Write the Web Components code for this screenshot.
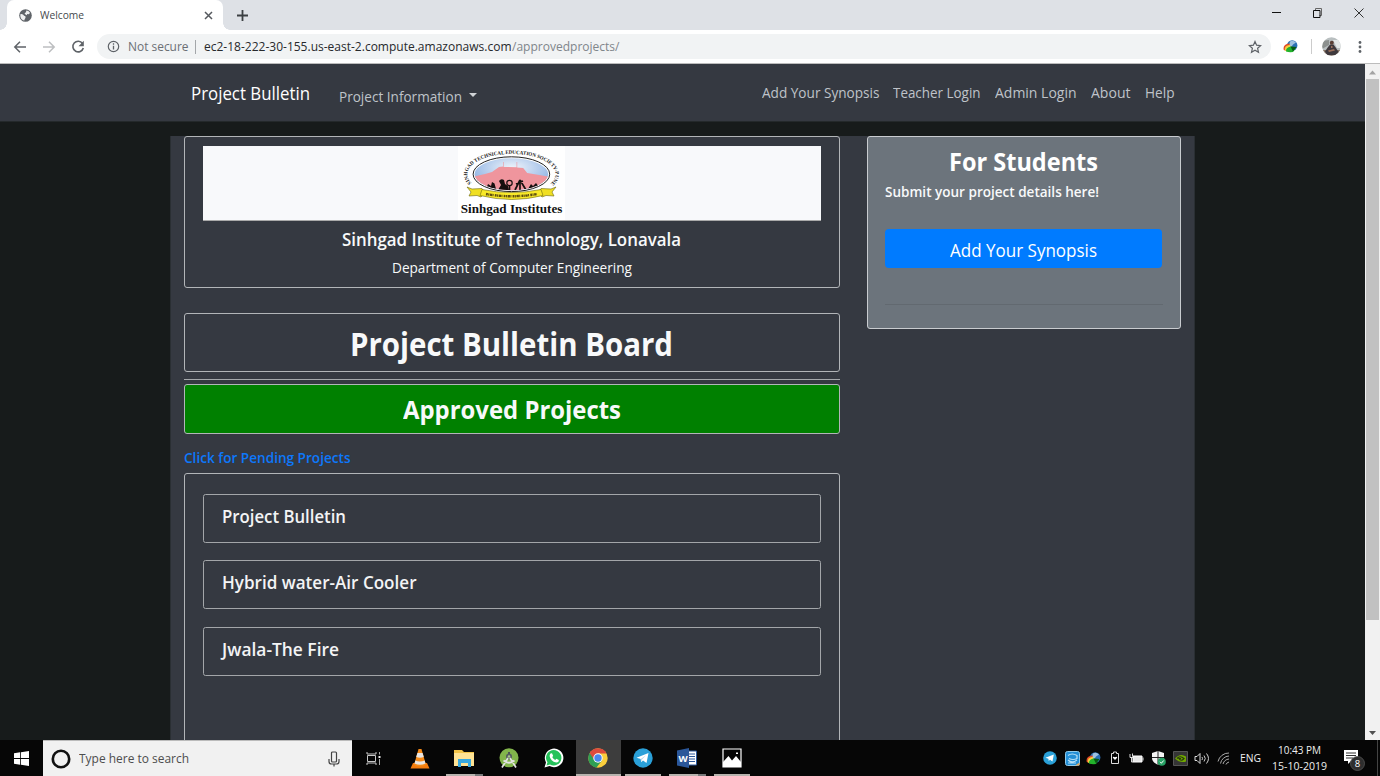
<!DOCTYPE html>
<html lang="en">
<head>
<meta charset="utf-8">
<title>Welcome</title>
<style>
html,body{margin:0;height:100%;overflow:hidden}
body{display:flex;flex-direction:column;width:1380px;height:776px;font-family:"Open Sans","Noto Sans",sans-serif;font-size:14.4px;background:#171b1b}
</style>
</head>
<body>
<browser-tabs></browser-tabs>
<browser-toolbar></browser-toolbar>
<page-view>
  <site-nav></site-nav>
  <bulletin-page></bulletin-page>
</page-view>
<task-bar></task-bar>
<script>
function component(name, css, html, setup) {
  const t = document.createElement('template');
  t.innerHTML = '<style>:host,*{box-sizing:border-box}svg{display:block;flex:none}' + css + '</style>' + html;
  customElements.define(name, class extends HTMLElement {
    constructor() {
      super();
      this.attachShadow({mode: 'open'}).append(t.content.cloneNode(true));
    }
    connectedCallback() { if (setup) setup(this, this.shadowRoot); }
  });
}

component('browser-tabs', `
:host{display:flex;height:30px;background:#dee1e6;flex:none;align-items:stretch;padding-left:7px}
.tab{width:216px;background:#fff;border-radius:7px 7px 0 0;display:flex;align-items:center;padding:0 10px 0 12px;color:#45494d;font-size:11px;position:relative}
.tab:before,.tab:after{content:"";position:absolute;bottom:0;width:7px;height:7px;background:radial-gradient(circle at 0 0,transparent 6.5px,#fff 7px)}
.tab:before{left:-7px}.tab:after{right:-7px;background:radial-gradient(circle at 100% 0,transparent 6.5px,#fff 7px)}
fit-text{margin:-2px 0 0 8px;flex:none}.x{margin-left:auto}
.plus{margin:9px 0 0 13px}
.win{margin-left:auto;display:flex;padding:7px 16px 0 0;gap:30px}
`, `
<div class="tab"><svg width="13" height="13" viewBox="0 0 13 13"><circle cx="6.5" cy="6.5" r="6.3" fill="#5f6368"/><path d="M1.400 5.200C2.800 4.600 4.500 5.500 5 6.800 6.400 6.900 7 7.800 6.400 9 5.800 9.800 5.400 10.800 5.300 11.600 2.500 11 .9 8.600 1.400 5.200zM7.300 1.500Q9.500 1.500 11 3.800L10 5.300 8.300 5 7.600 6.200 6.500 5.500 5.500 4.300 7 3.300z" fill="#fff" opacity=".9"/></svg>
<fit-text w="44">Welcome</fit-text><svg class="x" width="9" height="9" viewBox="0 0 9 9"><path d="M1 1l7 7M8 1l-7 7" stroke="#55595e" stroke-width="1.500"/></svg></div>
<svg class="plus" width="13" height="13"><path d="M6.500 1v11M1 6.500h11" stroke="#3c4043" stroke-width="1.800"/></svg>
<div class="win">
<svg width="11" height="12"><path d="M1 5.500h9" stroke="#111" stroke-width="1"/></svg>
<svg width="11" height="12"><path d="M3.500 3.500v-2h6v7h-2" fill="none" stroke="#666"/><path d="M1.500 3.500h6.500v7h-6.500z" fill="none" stroke="#111"/></svg>
<svg width="11" height="12"><path d="M1.500 1.500l9 9M10.500 1.500l-9 9" stroke="#333" stroke-width="1"/></svg>
</div>`);

component('idm-icon', `:host{display:block;flex:none}`, `
<svg width="15" height="13" viewBox="0 0 15 13"><circle cx="9.200" cy="5.500" r="5.200" fill="#2b70b5"/><path d="M7 1.500q3-2 6 1l-3 2-2 3-2-2z" fill="#9fc0df"/><path d="M.8 10Q-.7 4.500 6.500 3.500L7 6Q3 7 4 11z" fill="#e34a26"/><path d="M1.800 10.500Q1 5.500 7 4.700l.5 2.300Q4 7.500 4.500 11.500z" fill="#f3d03e"/><path d="M3 11.500Q2.500 7.500 8 6.500L13 7.500 10 12Q6 12.500 3 11.500z" fill="#23b32c"/><path d="M7.500 6.500l6 .5-3.500 4.500z" fill="#075a12"/></svg>`);

component('browser-toolbar', `
:host{display:flex;height:34px;background:#fff;flex:none;align-items:center;border-bottom:1px solid #bcbcbc;font-size:12.3px;color:#27292c}
.nav{display:flex;width:97px;padding-left:13px;gap:15px;flex:none}
.omni{display:flex;width:1174px;height:25px;border-radius:13px;background:#f1f3f4;align-items:center;padding:0 9px 0 10px;flex:none}
.ns{margin-left:7.500px;color:#6b6f74}.bar{width:1px;height:14px;background:#a3a6a9;margin:0 8px 0 7px}.path{color:#80868b}
.omni svg:last-child{margin-left:auto}
.omni fit-text{margin-top:-1px}
idm-icon{margin-left:12px}.sep{width:1px;height:15px;background:#ccc;margin:0 10px 0 13px}.dots{margin-left:17px}
`, `
<div class="nav">
<svg width="14" height="14"><path d="M13 7H2M7 1.800L1.800 7 7 12.200" fill="none" stroke="#5f6368" stroke-width="1.500"/></svg>
<svg width="14" height="14"><path d="M1 7h11M7 1.800L12.200 7 7 12.200" fill="none" stroke="#bdbfc1" stroke-width="1.500"/></svg>
<svg width="14" height="14"><path d="M11.500 3.500A5.300 5.300 0 1 0 12.300 8" fill="none" stroke="#5f6368" stroke-width="1.600"/><path d="M12.800 .8v5.400H7.500z" fill="#5f6368"/></svg>
</div>
<div class="omni">
<svg width="13" height="13"><circle cx="6.500" cy="6.500" r="5.200" fill="none" stroke="#5f6368" stroke-width="1.200"/><path d="M6.500 5.800v3.700M6.500 3.300v1.400" stroke="#5f6368" stroke-width="1.300"/></svg>
<fit-text class="ns" w="60.500">Not secure</fit-text><i class="bar"></i>
<fit-text w="307.500">ec2-18-222-30-155.us-east-2.compute.amazonaws.com</fit-text><fit-text class="path" w="107.500">/approvedprojects/</fit-text>
<svg width="14" height="14"><path d="M7 1.500l1.600 3.700 4 .4-3 2.700.9 4L7 10.200l-3.500 2.100.9-4-3-2.700 4-.4z" fill="none" stroke="#5f6368" stroke-width="1.200"/></svg>
</div>
<idm-icon></idm-icon><i class="sep"></i>
<svg width="19" height="19" viewBox="0 0 19 19"><clipPath id="a"><circle cx="9.500" cy="9.500" r="9.200"/></clipPath><g clip-path="url(#a)"><path fill="#b9bfc0" d="M0 0h19v19H0z"/><path fill="#8c908e" d="M0 4l7-1v5l-7 4z"/><path fill="#e4e8e8" d="M11 3h8v8h-4z"/><path fill="#8b7768" d="M0 13h19v6H0z"/><path fill="#3f393d" d="M5 18l-2-3.500 3-4.500 2-2.500h3.500L14 11l2.500 4-3 3z"/><circle cx="9.800" cy="5.700" r="2" fill="#5b4036"/><path d="M6 13.500l6-1.500 1 1.500-6 1.500zM9 9h1.500v2H9z" fill="#9c705b"/></g></svg>
<svg class="dots" width="4" height="14"><circle cx="2" cy="2.500" r="1.400" fill="#5f6368"/><circle cx="2" cy="7" r="1.400" fill="#5f6368"/><circle cx="2" cy="11.500" r="1.400" fill="#5f6368"/></svg>`);

component('page-view', `
:host{display:flex;height:676px;flex:none;overflow:hidden}
.doc{width:1365px;display:flex;flex-direction:column;flex:none}
.scroll{width:15px;background:#f1f1f1;display:flex;flex-direction:column;align-items:center;padding:6px 0 5px}
.thumb{width:13px;height:541px;background:#c1c1c1;margin-top:4px}.down{margin-top:auto}
`, `<div class="doc"><slot></slot></div>
<div class="scroll"><svg width="7" height="5"><path d="M0 4.500L3.500.5 7 4.500z" fill="#a3a3a3"/></svg><div class="thumb"></div><svg class="down" width="7" height="4"><path d="M0 0h7L3.500 4z" fill="#505050"/></svg></div>`);

component('site-nav', `
:host{display:flex;height:58px;flex:none;background:#353941;border-bottom:1px solid #24292b;align-items:center;padding:0 191px 0 191px;color:#bfc3c9}
.brand{font-size:17.800px;color:#fff}.info{margin:7px 0 0 29px}.caret{border:4.500px solid transparent;border-top-color:#d0d3d6;border-bottom:0;margin:5px 0 0 6.500px}
nav{margin-left:auto;display:flex;gap:14.200px}
`, `<fit-text class="brand" w="119">Project Bulletin</fit-text><fit-text class="info" w="123">Project Information</fit-text><i class="caret"></i>
<nav><fit-text w="117.500">Add Your Synopsis</fit-text><fit-text w="87.500">Teacher Login</fit-text><fit-text w="81.500">Admin Login</fit-text><fit-text w="39.500">About</fit-text><fit-text w="29.500">Help</fit-text></nav>`);

component('institute-logo', `:host{display:block;width:107px;height:74px;margin-right:1px}text{font-family:"Liberation Serif",serif;font-weight:700;fill:#111}`, `
<svg width="107" height="74" viewBox="0 0 107 74"><defs><radialGradient id="s" cx=".5" cy=".3" r=".6"><stop offset="0" stop-color="#eef4fb"/><stop offset="1" stop-color="#8bb0e2"/></radialGradient><clipPath id="c"><ellipse cx="53.400" cy="28.200" rx="36.800" ry="16"/></clipPath><path id="arc" d="M13.500 37A44 20.500 0 1 1 93.300 37"/></defs>
<path fill="#fff" d="M0 0h107v74H0z"/>
<text font-size="5.200"><textPath href="#arc" textLength="125" lengthAdjust="spacingAndGlyphs">SINHGAD TECHNICAL EDUCATION SOCIETY-PUNE</textPath></text>
<ellipse cx="53.400" cy="28.200" rx="38.300" ry="17.400" fill="#fff" stroke="#222" stroke-width="1"/>
<g clip-path="url(#c)"><path fill="url(#s)" d="M15 11h78v36H15z"/><path fill="#ef959d" d="M14 31l13-3 7-2 7-5 4-.5V16h.6v5l13 .2V16h.6v5.500l6 .5 4 5 12 2 12 2v16H14z"/>
<path fill="#16100f" d="M28 43l2-5 3 2 1-4 2.500 1.500L38 43zM40 44l3-5-2-4q2-3 5-1l1 4 3 2 1 4zM70 43l3-5 2 2 3-3 3 4 2 2z"/><circle cx="51.500" cy="37" r="2.700" fill="none" stroke="#16100f" stroke-width="1.200"/><path d="M51.500 39v5M62 34l-5 10M62 34v10M62 34l6 10M58 38l7-3" stroke="#16100f" stroke-width="1.700"/></g>
<path d="M9 41l5 2 10-.5 3 4-4 4.500-4-1.500-8 .5 2-4zM98 41l-5 2-10-.5-3 4 4 4.500 4-1.500 8 .5-2-4z" fill="#f0df22" stroke="#6c6611" stroke-width=".6"/><path d="M24 43.500q29 6 59 0l2 6q-31 8-63 0z" fill="#f8e928" stroke="#6c6611" stroke-width=".6"/><path d="M28 48q25 4.500 51 0" stroke="#5d4d10" stroke-width="2.400" fill="none" stroke-dasharray="1.800 .5 1 .6 2.400 .4 1 1.200"/>
<text x="2.800" y="66.500" font-size="12.600" textLength="101.500" lengthAdjust="spacingAndGlyphs">Sinhgad Institutes</text></svg>`);

component('outline-card', `:host{display:flex;flex-direction:column;align-items:center;border:1px solid #b2b5b8;border-radius:3px;flex:none;color:#f8f9fa}`, `<slot></slot>`);

component('project-item', `:host{display:flex;height:49px;margin-bottom:17.700px;border:1px solid #a3a6a9;border-radius:2.500px;align-self:stretch;padding:9px 0 0 17.500px;color:#f3f4f5;font-size:17.600px;font-weight:600;line-height:24px;flex:none}`, `<slot></slot>`);

component('bulletin-page', `
:host{display:flex;flex:1;margin:14px 0 0 170px;width:1025px;border:solid #2a2f33;border-width:0 1px;background:#353941;padding-left:13px;gap:27px}
main{width:656px;display:flex;flex-direction:column}
.inst{height:152px;padding:9px 18px 0}
.banner{width:618px;height:75px;background:#f8f9fb;border-bottom:1px solid #aaa;display:flex;justify-content:center;flex:none}
.name{font-size:17.600px;font-weight:600;margin:6px 1px 0 0}
.dept{margin:7px 1px 0 0}
.title{height:59px;margin-top:25px;justify-content:center;font-size:32px;font-weight:700;padding:1px 1px 0 0}
hr{border:0;height:1px;background:#a5a8ab;width:100%;margin:7px 0 4px;flex:none}
.approved{height:50px;background:#008000;font-size:25.500px;font-weight:700;justify-content:center}
.pending{color:#0d78fb;font-weight:600;margin:14px 0 5.500px}
.list{height:300px;padding:20px 18px 0}
.students{width:314px;height:193px;background:#6c747c;border-color:#c9ccd0;padding:7px 18px 0 17px}
.fs{font-size:25.300px;font-weight:700;color:#fff}
.sub{font-weight:600;align-self:flex-start;margin-top:4px}
.btn{width:277px;height:39px;border-radius:4px;background:#007bff;display:flex;justify-content:center;align-items:center;font-size:18px;color:#fff;margin:28px 0 0;flex:none;padding-top:2px}
.students hr{background:#626970;margin-top:36px;width:278px}
`, `<main>
<outline-card class="inst"><div class="banner"><institute-logo></institute-logo></div><fit-text class="name" w="339">Sinhgad Institute of Technology, Lonavala</fit-text><fit-text class="dept" w="240">Department of Computer Engineering</fit-text></outline-card>
<outline-card class="title"><fit-text w="323">Project Bulletin Board</fit-text></outline-card>
<hr>
<outline-card class="approved"><fit-text w="218">Approved Projects</fit-text></outline-card>
<fit-text class="pending" w="166.500">Click for Pending Projects</fit-text>
<outline-card class="list"><project-item><fit-text w="124">Project Bulletin</fit-text></project-item><project-item><fit-text w="194.500">Hybrid water-Air Cooler</fit-text></project-item><project-item><fit-text w="117">Jwala-The Fire</fit-text></project-item></outline-card>
</main>
<aside><outline-card class="students"><fit-text class="fs" w="149">For Students</fit-text><fit-text class="sub" w="214">Submit your project details here!</fit-text><div class="btn"><fit-text w="147">Add Your Synopsis</fit-text></div><hr></outline-card></aside>`);

component('task-icon', `
:host{display:flex;width:44.600px;height:36px;align-items:center;justify-content:center;flex:none;position:relative}
:host([active]){background:#3d3d3d}
:host([open]):after{content:"";position:absolute;left:4px;right:4px;bottom:0;height:2px;background:#b7b3ae}
:host([active]):after{left:0;right:0}
:host([stack]):after{background:linear-gradient(90deg,#b7b3ae 79%,#77797a 79%)}
`, `<slot></slot>`);

component('task-bar', `
:host{display:flex;height:36px;background:#060606;flex:none;color:#eee}
.start{width:43px;display:flex;align-items:center;justify-content:center}
.search{width:309px;background:#f1f1f1;border-top:1px solid #bbb;display:flex;align-items:center;padding:0 12px 0 8px;color:#4d4d4d;font-size:12.600px;flex:none;margin-right:1px}
.search fit-text{margin-left:8px}.search svg:last-child{margin-left:auto}
.tray{margin-left:auto;display:flex;align-items:center}
.cell{width:21.600px;display:flex;justify-content:center}
.eng{font-size:11px;margin:-1px 0 0 6px}
.clock{display:flex;flex-direction:column;align-items:center;font-size:11px;line-height:16px;margin-left:11px}
.note{margin:4px 12px 0 16px}.edge{width:1px;height:36px;background:#444;margin-right:2px}
svg text{font-family:"Open Sans","Noto Sans",sans-serif}
`, `
<div class="start"><svg width="15" height="15"><path d="M0 2.200l6.200-.9v5.800H0zM7 1.200L15 0v7.100H7zM0 7.900h6.200v5.800L0 12.800zM7 7.900h8V15l-8-1.200z" fill="#fff"/></svg></div>
<div class="search"><svg width="20" height="20"><circle cx="10" cy="10" r="8.200" fill="none" stroke="#111" stroke-width="2.600"/></svg><fit-text w="110">Type here to search</fit-text><svg width="12" height="16"><rect x="3.500" y="1" width="5" height="10" rx="1" fill="none" stroke="#444" stroke-width="1.200"/><path d="M1 8v2.500Q1 13 3.500 13h5q2.500 0 2.500-2.500V8M6 13v2.500" fill="none" stroke="#444" stroke-width="1.200"/></svg></div>
<task-icon><svg style="margin-right:3px" width="15" height="15"><path d="M1 1v2h9V1M1 14v-2h9v2M1.500 4.500h8v6h-8z" fill="none" stroke="#c8c8c8"/><path d="M13.500 1v2.500M13.500 8v6" stroke="#aaa"/><path d="M12.500 5h2v2h-2z" fill="#eee"/></svg></task-icon>
<task-icon><svg width="20" height="21"><path d="M3 15h14l2.500 5.500H.5z" fill="#f37a0c"/><path d="M8.500 1h3L16 17q-6 3-12 0z" fill="#f58a18"/><path d="M7.400 5h5.200l1.200 4Q10 10.500 6.200 9zM5.300 12.500q4.700 2 9.400 0l.8 3q-5.500 2.500-11 0z" fill="#e8e5e2"/></svg></task-icon>
<task-icon open stack><svg width="20" height="18"><path d="M0 1h8l2 2h10v14H0z" fill="#f2c449"/><path d="M0 4h20v13H0z" fill="#ffe394"/><path d="M4 18v-8h13v8h-3v-4H7v4z" fill="#39a9df"/></svg></task-icon>
<task-icon><svg width="20" height="20"><circle cx="10" cy="9.800" r="9.500" fill="#82b54b"/><path d="M9 4h2v3H9z" fill="#4b5055"/><circle cx="10" cy="8.500" r="3" fill="#555d60"/><circle cx="10" cy="8.500" r="1.300" fill="#a7c987"/><path d="M9 10L3 19.500M11 10l6 9.500M4.500 12.500q5.500 4.500 11 0" stroke="#e3e3e3" stroke-width="1.700" fill="none"/></svg></task-icon>
<task-icon><svg width="20" height="20"><path d="M.5 19.500L2 14.500A9.300 9.300 0 1 1 5.500 18z" fill="#fff"/><path d="M2.500 17.500l1-3.200A7.700 7.700 0 1 1 6 16.500z" fill="#25c25a"/><path d="M6.500 5.500L8 5.300l1.200 2.600-1 1.200q1 2 3 2.800l1.200-1.200 2.400 1.200q.2 2.500-2.600 2.500Q6.500 13.500 5.600 8q0-1.500.9-2.500z" fill="#fff"/></svg></task-icon>
<task-icon open active><svg width="20" height="20"><circle cx="10" cy="10" r="9.700" fill="#fbce3c"/><path d="M10 10L1.600 5.100A9.700 9.700 0 0 0 8.500 19.600L14 12.500z" fill="#2f9f55"/><path d="M1.600 5.100A9.700 9.700 0 0 1 18.600 5.500H10L6.300 12z" fill="#de4b3d"/><circle cx="10" cy="10" r="4.700" fill="#fff"/><circle cx="10" cy="10" r="3.700" fill="#4a87ee"/></svg></task-icon>
<task-icon open><svg width="20" height="20"><circle cx="10" cy="10" r="9.700" fill="#2aa0d8"/><path d="M3.500 9.800L15.500 5l-2 10-3.500-2.600-1.800 1.900-.5-3.300z" fill="#fff"/><path d="M7.700 11l5.300-3.800-4.200 4.500-.6 2.600z" fill="#b9d8ea"/></svg></task-icon>
<task-icon open stack><svg width="20" height="20"><path d="M9 3h10.500v14H9z" fill="#fff" stroke="#2b579a"/><path d="M11 6h7M11 8.500h7M11 11h7M11 13.500h7" stroke="#2b579a"/><path d="M0 2.500L12 0v20L0 17.500z" fill="#2b579a"/><text x="1.500" y="13.500" font-size="9.500" font-weight="700" fill="#fff">W</text></svg></task-icon>
<task-icon open><svg width="20" height="20"><path d="M1 1h18v18H1z" fill="#050505" stroke="#fff" stroke-width="1.200"/><path d="M1 14l5.500-6 3.500 4.500L14 8l5 6v5H1z" fill="#fff"/><path d="M14 4.500h2v1.500h-2z" fill="#fff"/></svg></task-icon>
<div class="tray">
<div class="cell"><svg width="14" height="14" viewBox="0 0 20 20"><circle cx="10" cy="10" r="9.700" fill="#2aa0d8"/><path d="M3.500 9.800L15.500 5l-2 10-3.500-2.600-1.800 1.900-.5-3.300z" fill="#fff"/></svg></div>
<div class="cell"><svg width="15" height="15"><rect x=".5" y=".5" width="14" height="14" rx="2" fill="#238ed5" stroke="#8fcaeb"/><path d="M3 4.500q4-3 9 0v3q-4 2-8 0M3 9q4 4 9 0M3 12h8" fill="none" stroke="#b6e0f7" stroke-width="1.200"/><path d="M10 14.500l4.500-3v3z" fill="#e6a85c"/></svg></div>
<div class="cell"><idm-icon></idm-icon></div>
<div class="cell"><svg width="10" height="14"><path d="M3.500 2.500V1h3v1.500h2v10h-7v-10z" fill="none" stroke="#ddd"/><path d="M5 9L2.800 6.700q.3-1.500 2.200-.4 1.900-1.100 2.200.4z" fill="#fff"/></svg></div>
<div class="cell"><svg width="15" height="11"><path d="M4 3h9v6H4z" fill="#e8e8e8" stroke="#fff"/><path d="M14 4.500v3M1 1v3.500h3M3.500.500v3M2.500 4.500V9H4" stroke="#ddd" fill="none"/></svg></div>
<div class="cell"><svg width="15" height="15"><path d="M7 0l6 2v5q0 4-6 7-6-3-6-7V2z" fill="#f4f4f4"/><path d="M7 0v14M1 6.500h12" stroke="#222"/><circle cx="10.800" cy="10.800" r="4" fill="#28a265"/><path d="M9 10.800l1.400 1.400 2.300-2.700" stroke="#fff" fill="none"/></svg></div>
<div class="cell"><svg width="15" height="15"><path d="M.5.5h14v14H.5z" fill="#353535" stroke="#555"/><path d="M2 7.500q5-6 11-2v5q-6 2-11-3z" fill="#70a900"/><path d="M4 7.500q3-3.500 7 0-3 3.500-5 0h2" fill="none" stroke="#29370e" stroke-width="1.200"/></svg></div>
<div class="cell"><svg width="16" height="13"><path d="M1 4.500h2l3-3v10l-3-3H1z" fill="none" stroke="#ddd"/><path d="M8 5q1 1.500 0 3M10 3.500q2.500 3 0 6M12.500 1.500q4 5 0 10" fill="none" stroke="#ccc"/></svg></div>
<div class="cell"><svg width="13" height="13"><path d="M1 9.500A11 11 0 0 1 12 1M3.500 11.500A9 9 0 0 1 12 4M6 12A7 7 0 0 1 12 7M9 12.500A4 4 0 0 1 12 10" fill="none" stroke="#aaa"/></svg></div>
<fit-text class="eng" w="21">ENG</fit-text>
<div class="clock"><fit-text w="43">10:43 PM</fit-text><fit-text w="55">15-10-2019</fit-text></div>
<svg class="note" width="22" height="22"><path d="M1 1h14v11H8l-3 3v-3H1z" fill="#fff"/><path d="M3 4h10M3 6.500h10M3 9h7" stroke="#333"/><circle cx="14.500" cy="14.500" r="7" fill="#2e2e2e" stroke="#555" stroke-width=".8"/><text x="14.500" y="18" text-anchor="middle" font-size="9.500" fill="#fff">8</text></svg>
<i class="edge"></i>
</div>`);

/* A single line of text condensed or widened to an exact advance width. */
component('fit-text', `:host{display:block;white-space:nowrap;flex:none}span{display:inline-block;transform-origin:0 50%}`, `<span><slot></slot></span>`, (host, root) => {
  const run = root.querySelector('span'), w = parseFloat(host.getAttribute('w'));
  run.style.transform = 'none';
  const natural = run.getBoundingClientRect().width;
  host.style.width = w + 'px';
  if (natural) run.style.transform = 'scaleX(' + w / natural + ')';
});
</script>
</body>
</html>
